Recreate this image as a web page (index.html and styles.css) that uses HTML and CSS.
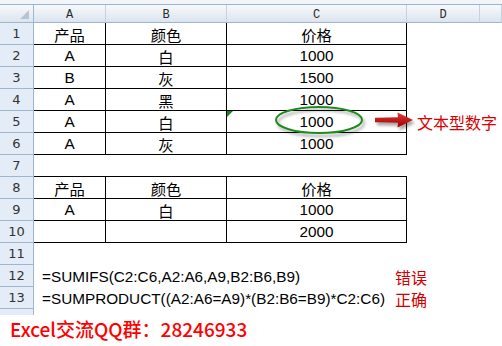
FILE: index.html
```html
<!DOCTYPE html>
<html lang="zh">
<head>
<meta charset="utf-8">
<title>SUMIFS 文本型数字</title>
<link rel="stylesheet" href="styles.css">
</head>
<body>
<div class="frame">
  <div class="topbar"></div>
  <div class="sheet">
    <div class="corner"></div>
    <div class="ch">A</div><div class="ch">B</div><div class="ch">C</div><div class="ch">D</div><div class="ch"></div>

    <div class="rh">1</div><div class="c bd">产品</div><div class="c bd">颜色</div><div class="c bd">价格</div><div class="c"></div><div class="c"></div>
    <div class="rh">2</div><div class="c bd">A</div><div class="c bd">白</div><div class="c bd">1000</div><div class="c"></div><div class="c"></div>
    <div class="rh">3</div><div class="c bd">B</div><div class="c bd">灰</div><div class="c bd">1500</div><div class="c"></div><div class="c"></div>
    <div class="rh">4</div><div class="c bd">A</div><div class="c bd">黑</div><div class="c bd">1000</div><div class="c"></div><div class="c"></div>
    <div class="rh">5</div><div class="c bd">A</div><div class="c bd">白</div><div class="c bd txtnum">1000</div><div class="c note">文本型数字</div><div class="c"></div>
    <div class="rh">6</div><div class="c bd">A</div><div class="c bd">灰</div><div class="c bd">1000</div><div class="c"></div><div class="c"></div>
    <div class="rh">7</div><div class="c bb"></div><div class="c bb"></div><div class="c bb"></div><div class="c"></div><div class="c"></div>
    <div class="rh">8</div><div class="c bd">产品</div><div class="c bd">颜色</div><div class="c bd">价格</div><div class="c"></div><div class="c"></div>
    <div class="rh">9</div><div class="c bd">A</div><div class="c bd">白</div><div class="c bd">1000</div><div class="c"></div><div class="c"></div>
    <div class="rh">10</div><div class="c bd"></div><div class="c bd"></div><div class="c bd">2000</div><div class="c"></div><div class="c"></div>
    <div class="rh">11</div><div class="frow"></div>
    <div class="rh">12</div><div class="frow"><div class="formula">=SUMIFS(C2:C6,A2:A6,A9,B2:B6,B9)</div><div class="label">错误</div></div>
    <div class="rh">13</div><div class="frow"><div class="formula">=SUMPRODUCT((A2:A6=A9)*(B2:B6=B9)*C2:C6)</div><div class="label">正确</div></div>
    <div class="rh rh-cut">14</div><div class="frow"></div>
  </div>
  <div class="footer">Excel交流QQ群：28246933</div>
  <svg class="overlay" width="502" height="346" viewBox="0 0 502 346">
    <defs>
      <filter id="sh" x="-30%" y="-80%" width="160%" height="260%">
        <feDropShadow dx="2" dy="3" stdDeviation="1.8" flood-color="#000" flood-opacity="0.35"/>
      </filter>
      <linearGradient id="ar" x1="0" y1="0" x2="0" y2="1">
        <stop offset="0" stop-color="#e23a3a"/>
        <stop offset="1" stop-color="#9e0000"/>
      </linearGradient>
    </defs>
    <ellipse cx="319" cy="120" rx="43" ry="13" fill="none" stroke="#1f8a1f" stroke-width="2" filter="url(#sh)"/>
    <path d="M375 117.8 L398 117.3 L397.5 112.5 L413 120 L397.5 127.5 L398 122.7 L375 122.2 Z" fill="url(#ar)" filter="url(#sh)"/>
  </svg>
</div>
</body>
</html>
```
FILE: styles.css
```css
html, body {
  margin: 0;
  padding: 0;
  background: #ffffff;
}

.frame {
  position: relative;
  width: 502px;
  height: 346px;
  overflow: hidden;
  background: #ffffff;
}

.topbar {
  height: 4px;
  background: #f1f4f8;
  border-bottom: 1px solid #9db2cb;
}

.sheet {
  display: grid;
  grid-template-columns: 34px 72px 121px 180px 73px 1fr;
  grid-template-rows: 18px repeat(14, 22px);
  height: 310px;
  overflow: hidden;
}

.corner,
.ch {
  box-sizing: border-box;
  background: linear-gradient(#f7f9fc, #dce4ee);
  border-bottom: 1px solid #9eb6ce;
  border-right: 1px solid #c3d1e2;
}

.corner {
  position: relative;
  border-right-color: #9eb6ce;
}

.corner::after {
  content: "";
  position: absolute;
  right: 4px;
  bottom: 3px;
  width: 0;
  height: 0;
  border-left: 9px solid transparent;
  border-bottom: 9px solid #b7c3d3;
}

.ch {
  display: flex;
  justify-content: center;
  align-items: center;
  padding-top: 2px;
  font: 12px "Liberation Mono", monospace;
  color: #2a2a2a;
}

.rh {
  box-sizing: border-box;
  display: flex;
  justify-content: center;
  align-items: center;
  background: #e4ecf7;
  border-bottom: 1px solid #9eb6ce;
  border-right: 1px solid #9eb6ce;
  font: 13px "DejaVu Sans", sans-serif;
  color: #333333;
  overflow: hidden;
}

.c {
  box-sizing: border-box;
  display: flex;
  justify-content: center;
  align-items: center;
  font: 15.3px "Liberation Sans", "Noto Sans CJK SC", sans-serif;
  color: #000;
  white-space: nowrap;
}

.bd {
  border-right: 1px solid #000;
  border-bottom: 1px solid #000;
}

.bb {
  border-bottom: 1px solid #000;
}

.txtnum {
  position: relative;
}

.txtnum::before {
  content: "";
  position: absolute;
  left: 0;
  top: 0;
  width: 0;
  height: 0;
  border-top: 6px solid #17861c;
  border-right: 6px solid transparent;
}

.note {
  justify-content: flex-start;
  padding-left: 10px;
  font: 16px "Noto Sans CJK SC", sans-serif;
  color: #d80000;
  overflow: visible;
}

.frow {
  grid-column: 2 / -1;
  display: grid;
  grid-template-columns: 361px 1fr;
  align-items: center;
}

.formula {
  padding-left: 8px;
  font: 15.3px "Liberation Sans", sans-serif;
  color: #000;
  white-space: nowrap;
}

.label {
  font: 16px "Noto Sans CJK SC", sans-serif;
  color: #d40000;
  white-space: nowrap;
}

.footer {
  height: 31px;
  line-height: 31px;
  padding-left: 10px;
  background: #ffffff;
  font: 500 19px "Noto Sans CJK SC", sans-serif;
  color: #ff0000;
  white-space: nowrap;
}

.overlay {
  position: absolute;
  left: 0;
  top: 0;
  pointer-events: none;
}
```
